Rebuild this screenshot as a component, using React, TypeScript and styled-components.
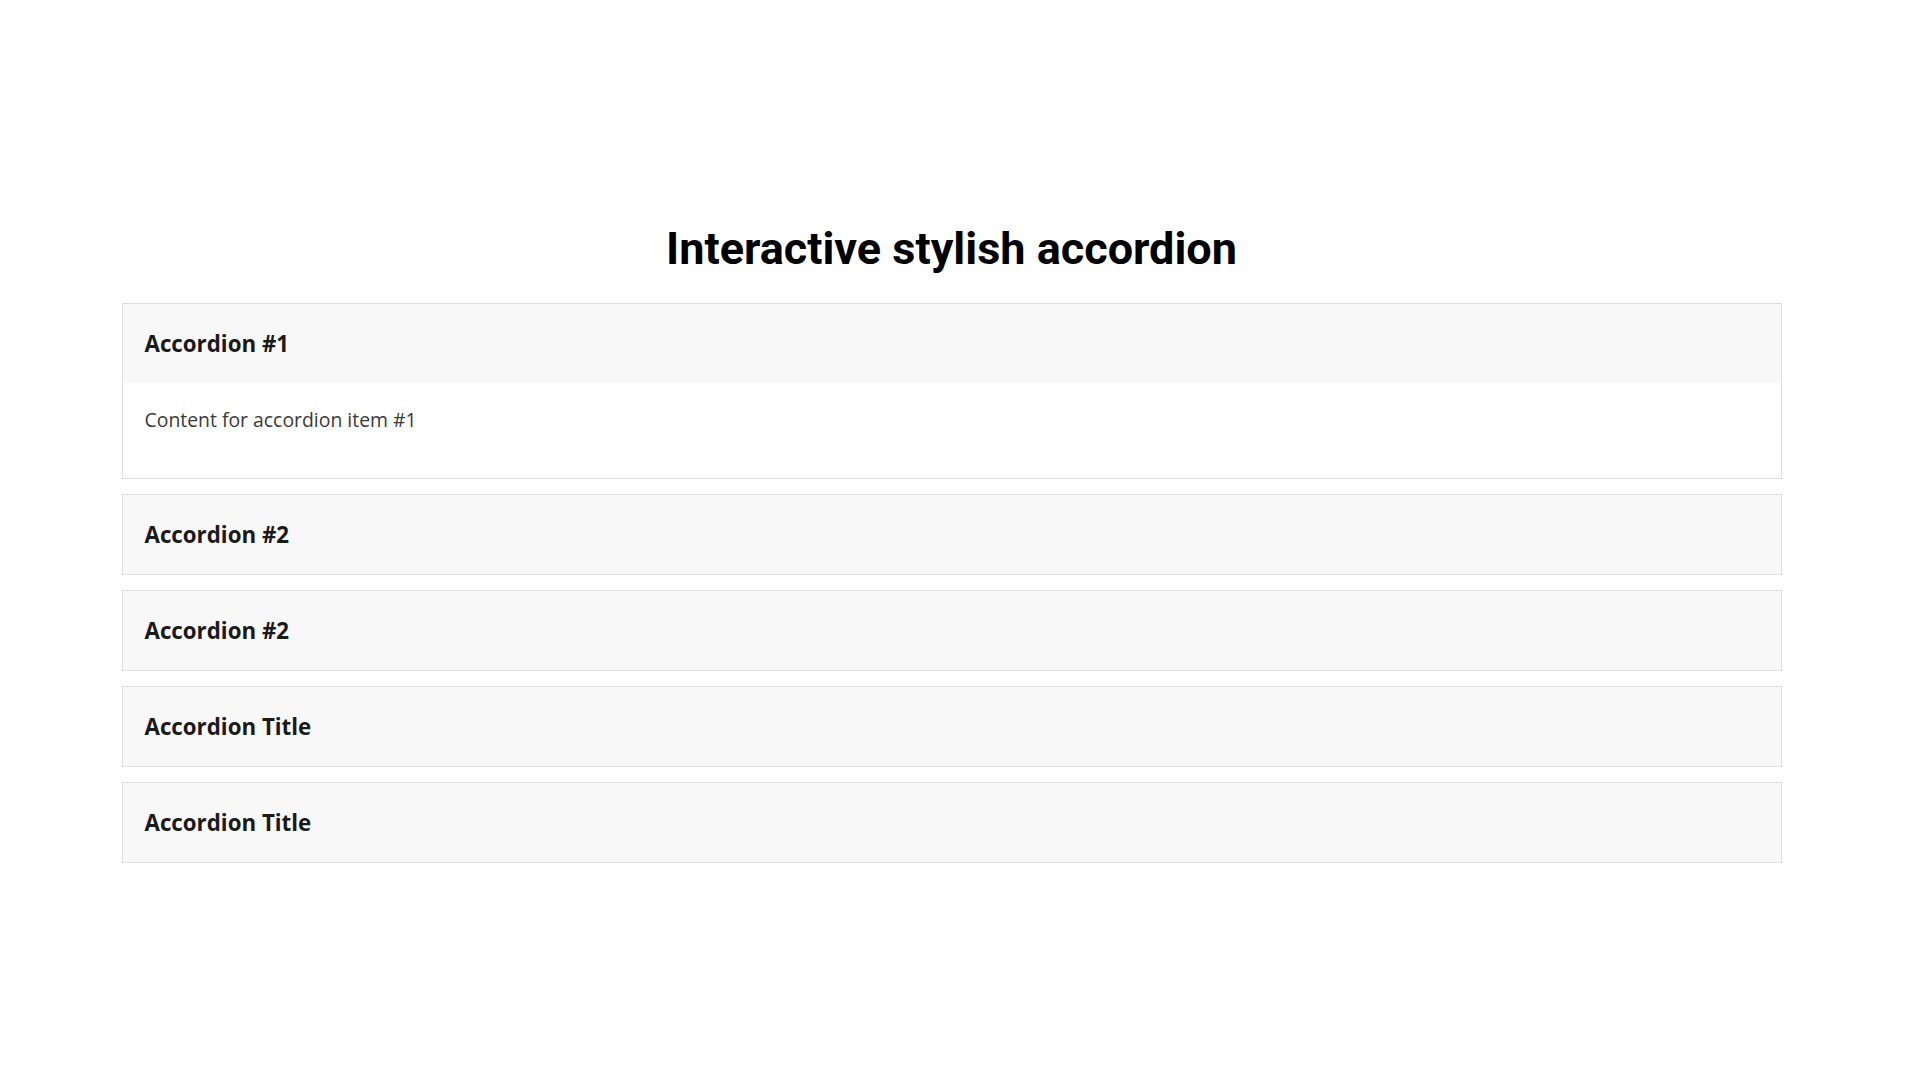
import React, { useState } from 'react';
import styled, { createGlobalStyle } from 'styled-components';

const GlobalStyle = createGlobalStyle`
  html, body {
    margin: 0;
    padding: 0;
    background: #ffffff;
  }
`;

const Page = styled.main`
  width: calc(100% - 17px);
  padding-top: 222px;
  padding-bottom: 120px;
`;

const Heading = styled.h1`
  margin: 0 0 28px;
  font-family: Roboto, 'Liberation Sans', sans-serif;
  font-size: 45px;
  line-height: 53px;
  font-weight: 700;
  color: #000;
  text-align: center;
`;

const List = styled.div`
  width: 1660px;
  margin: 0 auto;
  display: flex;
  flex-direction: column;
  gap: 15px;
`;

const Item = styled.section`
  border: 1px solid #dedede;
  background: #fff;
`;

const Header = styled.button`
  display: flex;
  align-items: center;
  width: 100%;
  height: 79px;
  padding: 0 22px;
  border: none;
  background: #f8f8f8;
  font-family: 'Open Sans', 'Noto Sans', sans-serif;
  font-size: 22.3px;
  line-height: 30px;
  font-weight: 700;
  color: #1a1a1a;
  text-align: left;
  cursor: pointer;
`;

const Body = styled.div`
  padding: 22px 22px 43px;
  font-family: 'Open Sans', 'Noto Sans', sans-serif;
  font-size: 19.4px;
  line-height: 30px;
  color: #3a3a3a;
`;

const items = [
  { title: 'Accordion #1', content: 'Content for accordion item #1' },
  { title: 'Accordion #2', content: 'Content for accordion item #2' },
  { title: 'Accordion #2', content: 'Content for accordion item #3' },
  { title: 'Accordion Title', content: 'Content for accordion item #4' },
  { title: 'Accordion Title', content: 'Content for accordion item #5' },
];

const App: React.FC = () => {
  const [open, setOpen] = useState<number | null>(0);

  return (
    <>
      <GlobalStyle />
      <Page>
        <Heading>Interactive stylish accordion</Heading>
        <List>
          {items.map((item, i) => (
            <Item key={i}>
              <Header onClick={() => setOpen(open === i ? null : i)}>{item.title}</Header>
              {open === i && <Body>{item.content}</Body>}
            </Item>
          ))}
        </List>
      </Page>
    </>
  );
};

export default App;
